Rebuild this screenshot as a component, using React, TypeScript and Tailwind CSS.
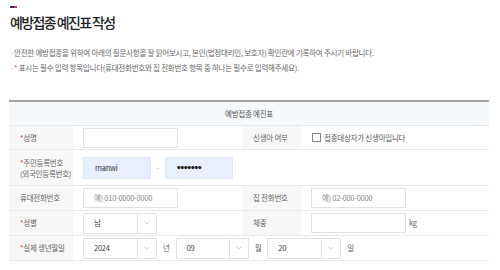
import { ChevronDown } from 'lucide-react';

const FONT = { fontFamily: '"Noto Sans CJK KR", "Noto Sans", sans-serif' };

function Req() {
  return <span className="text-[#e0303a]">*</span>;
}

function Select({ value, w = 'w-[74px]' }: { value: string; w?: string }) {
  return (
    <div className={`${w} h-[21px] flex border border-[#e2e2e2] bg-white`}>
      <div className="flex-1 flex items-center pl-[10px] text-[#444]">{value}</div>
      <div className="w-[19px] border-l border-[#e2e2e2] flex items-center justify-center">
        <ChevronDown className="w-[8px] h-[8px] text-[#999]" strokeWidth={1.5} />
      </div>
    </div>
  );
}

function Input({ placeholder = '', w = 'w-[95px]' }: { placeholder?: string; w?: string }) {
  return (
    <div className={`${w} h-[20px] border border-[#e2e2e2] bg-white flex items-center pl-[10px] text-[#888]`}>
      {placeholder}
    </div>
  );
}

export default function App() {
  const label = 'bg-[#f7f7f7] flex items-center pl-[11px] text-[#666]';
  const row = 'border-b border-[#e8e8e8]';

  return (
    <div className="w-[500px] h-[270px] bg-white overflow-hidden pt-[6px] text-[7.5px] tracking-[-0.25px]" style={FONT}>
      <div className="pl-[10px]">
        <div className="flex w-[7px] h-[2px]">
          <div className="flex-1 bg-[#1f2f6e]" />
          <div className="flex-1 bg-[#d83040]" />
        </div>
        <h1 className="mt-[5px] text-[14px] leading-[18px] font-medium text-[#222] tracking-[-1.6px]">
          예방접종 예진표 작성
        </h1>
      </div>

      <ul className="mt-[16px] pl-[10px] flex flex-col gap-[4px] text-[#666]">
        <li className="flex items-center h-[11px]">
          <span className="w-[4px] text-[#aaa]">·</span>
          <span>안전한 예방접종을 위하여 아래의 질문사항을 잘 읽어보시고, 본인(법정대리인, 보호자) 확인란에 기록하여 주시기 바랍니다.</span>
        </li>
        <li className="flex items-center h-[11px]">
          <span className="w-[4px] text-[#aaa]">·</span>
          <span>
            <Req /> 표시는 필수 입력 항목입니다(휴대전화번호와 집 전화번호 항목 중 하나는 필수로 입력해주세요).
          </span>
        </li>
      </ul>

      <div className="mt-[27px] ml-[9px] w-[480px] border-t-2 border-[#a3a3a3]">
        <div className={`h-[24px] bg-[#f5f9fc] flex items-center justify-center text-[#555] ${row}`}>
          예방접종 예진표
        </div>

        <div className={`grid grid-cols-[64px_169px_59px_1fr] h-[24px] ${row}`}>
          <div className={label}><Req />성명</div>
          <div className="flex items-center pl-[10px]"><Input w="w-[95px]" /></div>
          <div className={label}>신생아 여부</div>
          <div className="flex items-center pl-[11px] gap-[3px] text-[#555]">
            <span className="w-[9px] h-[9px] border border-[#888] bg-white" />
            접종대상자가 신생아입니다
          </div>
        </div>

        <div className={`grid grid-cols-[64px_1fr] h-[36px] ${row}`}>
          <div className={`${label} flex-col !items-start justify-center leading-[11px]`}>
            <span><Req />주민등록번호</span>
            <span>(외국인등록번호)</span>
          </div>
          <div className="flex items-center pl-[10px]">
            <div className="w-[68px] h-[22px] bg-[#e8f0fe] border border-[#e2e6ee] flex items-center pl-[11px] text-[#333]">manwi</div>
            <span className="w-[14px] text-center text-[#999]">-</span>
            <div className="w-[68px] h-[22px] bg-[#e8f0fe] border border-[#e2e6ee] flex items-center pl-[11px] text-[#222] text-[3.5px] tracking-[0px]">●●●●●●●</div>
          </div>
        </div>

        <div className={`grid grid-cols-[64px_169px_59px_1fr] h-[25px] ${row}`}>
          <div className={label}>휴대전화번호</div>
          <div className="flex items-center pl-[10px]"><Input placeholder="예) 010-0000-0000" /></div>
          <div className={label}>집 전화번호</div>
          <div className="flex items-center pl-[10px]"><Input placeholder="예) 02-000-0000" /></div>
        </div>

        <div className={`grid grid-cols-[64px_169px_59px_1fr] h-[25px] ${row}`}>
          <div className={label}><Req />성별</div>
          <div className="flex items-center pl-[10px]"><Select value="남" /></div>
          <div className={label}>체중</div>
          <div className="flex items-center pl-[10px] gap-[3px] text-[#666]">
            <Input />
            kg
          </div>
        </div>

        <div className={`grid grid-cols-[64px_1fr] h-[25px] ${row}`}>
          <div className={label}><Req />실제 생년월일</div>
          <div className="flex items-center pl-[10px] gap-[6px] text-[#666]">
            <Select value="2024" />
            <span>년</span>
            <Select value="09" w="w-[73px]" />
            <span>월</span>
            <Select value="20" />
            <span>일</span>
          </div>
        </div>
      </div>
    </div>
  );
}
